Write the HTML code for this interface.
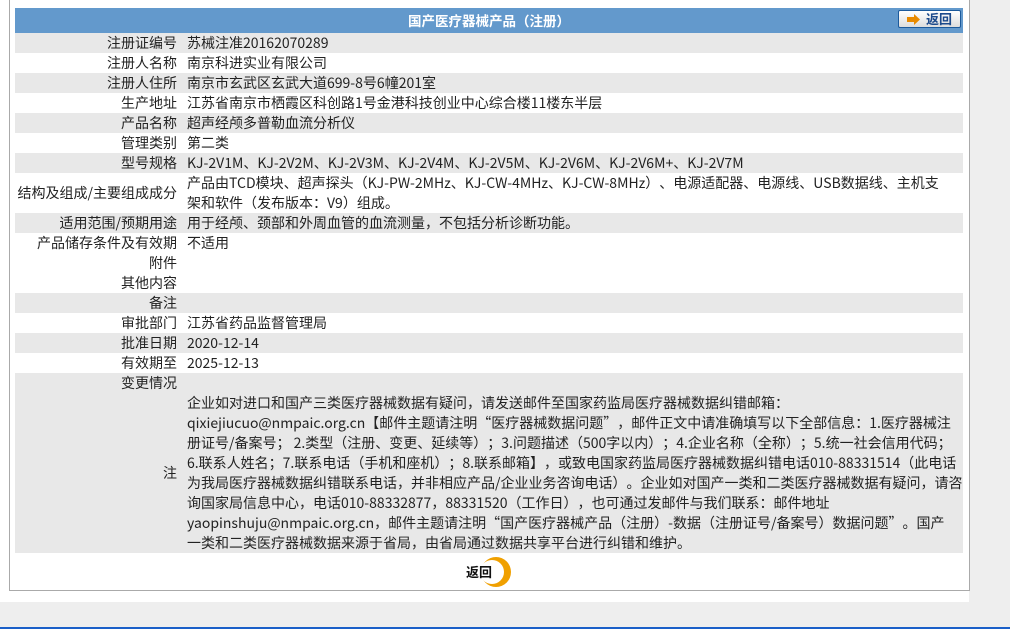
<!DOCTYPE html>
<html><head><meta charset="utf-8"><style>
html,body{margin:0;padding:0;}
body{width:1010px;height:629px;background:#eeeeee;position:relative;overflow:hidden;font-family:"Noto Sans CJK SC","Liberation Sans",sans-serif;font-size:14px;color:#222;text-spacing-trim:space-all;font-feature-settings:"chws" 0,"halt" 0,"palt" 0;}
#white{position:absolute;left:0;top:0;width:969px;height:602px;background:#fff;}
#topline{position:absolute;left:15px;top:0;width:468px;height:2px;background:#e0e0e0;}
#box{position:absolute;left:9px;top:-2px;width:959px;height:592px;border:1px solid #aaa;border-top:none;background:#fff;}
#hdr{position:absolute;left:15px;top:8px;width:948px;height:25px;background:#6399cc;color:#fff;font-weight:bold;text-align:center;line-height:25px;font-size:13.5px;}
#btn{position:absolute;left:898px;top:10px;width:63px;height:18px;border:1px solid #1c5a9c;border-radius:2px;background:linear-gradient(#fff,#ddd);box-sizing:border-box;}
#btn span{position:absolute;left:27px;top:0;line-height:16px;color:#1c4a8c;font-weight:bold;font-size:13px;}
table{position:absolute;left:15px;top:33px;width:948px;border-collapse:collapse;}
td{padding:0;height:20px;line-height:20px;vertical-align:top;white-space:nowrap;}
td.l{width:162px;text-align:right;padding-right:10px;}
td.v{padding-left:0px;}
tr.g td{background:#e8e8e8;}
#bl{position:absolute;left:0;top:627px;width:1010px;height:2px;background:#1a5fc8;}
</style></head><body>
<div id="white"></div>
<div id="topline"></div>
<div id="box"></div>
<div id="hdr">国产医疗器械产品（注册）</div>
<div id="btn"><svg style="position:absolute;left:8px;top:3px" width="14" height="11"><path d="M0 3h7V0l6 5.5-6 5.5V8H0z" fill="#e88a00"/></svg><span>返回</span></div>
<table>
<tr class="g"><td class="l">注册证编号</td><td class="v">苏械注准20162070289</td></tr>
<tr><td class="l">注册人名称</td><td class="v">南京科进实业有限公司</td></tr>
<tr class="g"><td class="l">注册人住所</td><td class="v">南京市玄武区玄武大道699-8号6幢201室</td></tr>
<tr><td class="l">生产地址</td><td class="v">江苏省南京市栖霞区科创路1号金港科技创业中心综合楼11楼东半层</td></tr>
<tr class="g"><td class="l">产品名称</td><td class="v">超声经颅多普勒血流分析仪</td></tr>
<tr><td class="l">管理类别</td><td class="v">第二类</td></tr>
<tr class="g"><td class="l">型号规格</td><td class="v">KJ-2V1M、KJ-2V2M、KJ-2V3M、KJ-2V4M、KJ-2V5M、KJ-2V6M、KJ-2V6M+、KJ-2V7M</td></tr>
<tr><td class="l" style="vertical-align:middle">结构及组成/主要组成成分</td><td class="v">产品由TCD模块、超声探头（KJ-PW-2MHz、KJ-CW-4MHz、KJ-CW-8MHz）、电源适配器、电源线、USB数据线、主机支<br>架和软件（发布版本：V9）组成。</td></tr>
<tr class="g"><td class="l">适用范围/预期用途</td><td class="v">用于经颅、颈部和外周血管的血流测量，不包括分析诊断功能。</td></tr>
<tr><td class="l">产品储存条件及有效期</td><td class="v">不适用</td></tr>
<tr><td class="l">附件</td><td class="v"></td></tr>
<tr><td class="l">其他内容</td><td class="v"></td></tr>
<tr class="g"><td class="l">备注</td><td class="v">&nbsp;</td></tr>
<tr><td class="l">审批部门</td><td class="v">江苏省药品监督管理局</td></tr>
<tr class="g"><td class="l">批准日期</td><td class="v">2020-12-14</td></tr>
<tr><td class="l">有效期至</td><td class="v">2025-12-13</td></tr>
<tr class="g"><td class="l">变更情况</td><td class="v"></td></tr>
<tr class="g"><td class="l" style="vertical-align:middle">注</td><td class="v">企业如对进口和国产三类医疗器械数据有疑问，请发送邮件至国家药监局医疗器械数据纠错邮箱：<br>qixiejiucuo@nmpaic.org.cn【邮件主题请注明“医疗器械数据问题”，邮件正文中请准确填写以下全部信息：1.医疗器械注<br>册证号/备案号； 2.类型（注册、变更、延续等）；3.问题描述（500字以内）；4.企业名称（全称）；5.统一社会信用代码；<br>6.联系人姓名；7.联系电话（手机和座机）；8.联系邮箱】，或致电国家药监局医疗器械数据纠错电话010-88331514（此电话<br>为我局医疗器械数据纠错联系电话，并非相应产品/企业业务咨询电话）。企业如对国产一类和二类医疗器械数据有疑问，请咨<br>询国家局信息中心，电话010-88332877，88331520（工作日），也可通过发邮件与我们联系：邮件地址<br>yaopinshuju@nmpaic.org.cn，邮件主题请注明“国产医疗器械产品（注册）-数据（注册证号/备案号）数据问题”。国产<br>一类和二类医疗器械数据来源于省局，由省局通过数据共享平台进行纠错和维护。</td></tr>
</table>
<svg style="position:absolute;left:474px;top:556px" width="40" height="32"><circle cx="22" cy="16" r="15" fill="#f0a000"/><circle cx="18" cy="16" r="12" fill="#fff"/></svg>
<div style="position:absolute;left:466px;top:563px;font-weight:bold;font-size:13px;color:#111;line-height:18px">返回</div>
<div id="bl"></div>
</body></html>
